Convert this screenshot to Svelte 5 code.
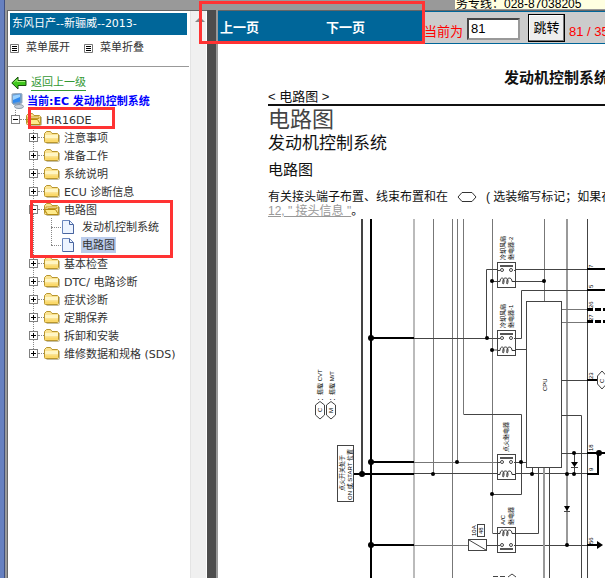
<script>
  let rootOpen = $state(true);
  let sections = $state([
    { name: '注意事项', open: false, pages: [] },
    { name: '准备工作', open: false, pages: [] },
    { name: '系统说明', open: false, pages: [] },
    { name: 'ECU 诊断信息', open: false, pages: [] },
    { name: '电路图', open: true, pages: ['发动机控制系统', '电路图'] },
    { name: '基本检查', open: false, pages: [] },
    { name: 'DTC/ 电路诊断', open: false, pages: [] },
    { name: '症状诊断', open: false, pages: [] },
    { name: '定期保养', open: false, pages: [] },
    { name: '拆卸和安装', open: false, pages: [] },
    { name: '维修数据和规格 (SDS)', open: false, pages: [] }
  ]);
  let page = $state('81');

  function setAll(open) {
    rootOpen = open;
    for (const s of sections) s.open = open;
  }

  // [x1, y1, x2, y2, style]
  const wires = [
    [362, 219, 362, 474, 'bus'], [371, 219, 371, 578, 'bold'],
    [414, 219, 414, 578, 'pale'], [433.5, 219, 433.5, 474, 'grey'],
    [452.5, 219, 452.5, 578, 'grey'], [457.5, 219, 457.5, 462, 'grey'],
    [463.5, 219, 463.5, 414, 'grey'], [492.5, 219, 492.5, 533, 'grey'],
    [544.5, 219, 544.5, 302, 'grey'], [567, 219, 567, 545, 'mid'],
    [587.5, 219, 587.5, 578, 'thin'],
    [371, 338, 414, 338, 'bold'], [414, 338.5, 498, 338.5, 'thin'],
    [371, 462, 414, 462, 'bold'], [414, 462.5, 498, 462.5, 'grey'],
    [354, 474, 414, 474, 'bold'], [414, 473.5, 498, 473.5, 'thin'],
    [371, 545, 414, 545, 'bold'], [414, 545.5, 469, 545.5, 'grey'],
    [487, 545.5, 498, 545.5, 'thin'], [516, 545.5, 587, 545.5, 'thin'],
    [587, 545, 598, 545, 'bold'],
    [516, 269.5, 587, 269.5, 'thin'], [587, 269, 605, 269, 'bold'],
    [492, 281.5, 498, 281.5, 'thin'], [516, 281.5, 544, 281.5, 'thin'],
    [587, 290, 605, 290, 'bold'],
    [492, 350, 498, 350, 'thin'], [516, 349.5, 527, 349.5, 'thin'],
    [562, 309.5, 587, 309.5, 'grey'], [562, 322.5, 587, 322.5, 'grey'],
    [562, 380.5, 587, 380.5, 'thin'], [587, 380, 597, 380, 'bold'],
    [562, 453.5, 587, 453.5, 'thin'], [587, 453, 605, 453, 'bold'],
    [516, 462.5, 527, 462.5, 'thin'], [516, 473.5, 587, 473.5, 'thin'],
    [532.5, 467, 532.5, 474, 'thin'], [574.5, 453, 574.5, 474, 'thin'],
    [544, 467, 544, 578, 'mid'], [549.5, 467, 549.5, 578, 'thin']
  ];
  const bends = [
    'M498 269.5H486.5V338', 'M516 338.5H521.5V290.5H587', 'M463.5 414.5H521.5V494.5H492',
    'M492.5 533.5H498', 'M516 533.5H538.5V467', 'M562 415.5H581.5V578'
  ];
  const dots = [
    [371, 338, 3], [371, 462, 3], [362, 474, 3], [371, 545, 3], [599, 453, 3],
    [433, 474, 2], [457, 462, 2], [487, 338, 2], [492, 281, 2], [544, 281, 2],
    [492, 350, 2], [521, 462, 2], [532, 474, 2], [567, 474, 2], [574, 474, 2],
    [574, 453, 2], [492, 494, 2], [567, 545, 2]
  ];
  // box top, contact height, coil height
  const relays = [
    [262, 270, 281], [330, 338, 350], [454, 462, 474], [527, 545, 533]
  ];
  const labels = [
    [505, 260, '冷却风扇'], [513, 260, '继电器-2'], [505, 328, '冷却风扇'], [513, 328, '继电器-1'],
    [508, 452, '点火继电器'], [505, 525, 'A/C'], [513, 525, '继电器'], [476, 536, '10A'],
    [483, 534, '48'], [547, 391, 'CPU'], [322, 401, '：搭载 CVT'], [334, 401, '：搭载 M/T'],
    [344, 491, '点火开关处于'], [352, 500, 'ON 或 START 位置'], [593, 268, '7'], [593, 288, '5'],
    [593, 308, '26'], [593, 321, '27'], [593, 379, '23'], [593, 451, '18'],
    [593, 471, '9'], [593, 544, '56'], [322, 412, 'C'], [333, 413, 'M'], [604, 383, 'C']
  ];
</script>

{#snippet folder(open)}
  <svg class="folder" viewBox="0 0 16 14" aria-hidden="true">
    <path d="M2.5 13.5H14.5Q15.5 13.5 15.5 12V5" fill="none" stroke="#c4bea4" />
    <path d="M.5 11.5V3.5L2.5 1.5H6.5L8 3.5H13.5L14.5 4.5V11.5Q14.5 12.5 13.5 12.5H1.5Q.5 12.5 .5 11.5Z" fill="#fbe391" stroke="#b8962e" />
    {#if open}
      <path d="M3.5 6.5H13V5H2V11" fill="#fffbe0" stroke="#c79b22" />
      <path d="M.5 7.5H11.5L14.5 12.5H3.5Z" fill="#ffeb8c" stroke="#b58b12" />
    {:else}
      <path d="M1 5H14V8H1Z" fill="#fff6c4" />
      <path d="M1 9.500H14V12H1Z" fill="#fbd96a" />
    {/if}
  </svg>
{/snippet}

{#snippet listIcon()}
  <svg class="list-icon" viewBox="0 0 9 9" aria-hidden="true">
    <path d="M.5 .5H8.5V8.5H.5Z" fill="#fff" stroke="#777" />
    <path d="M2 2.5H7M2 4.5H7M2 6.5H7" stroke="#000" />
  </svg>
{/snippet}

<div class="window">
  <div class="hotline"><span>务专线：028-87038205</span></div>
  <div class="panes">
    <nav class="sidebar">
      <div class="side-body">
        <h2 class="car">东风日产--新骊威--2013-</h2>
        <div class="tools">
          <button onclick={() => setAll(true)}>{@render listIcon()}菜单展开</button>
          <button onclick={() => setAll(false)}>{@render listIcon()}菜单折叠</button>
        </div>
        <div class="line back">
          <svg width="16" height="14" viewBox="0 0 16 14" aria-hidden="true">
            <path d="M.8 7L7 1V4.5H15V9.5H7V13Z" fill="#3fc71d" stroke="#174d0b" />
            <path d="M3 6.5L6 3.5V5.5H14" fill="none" stroke="#a4f07a" />
          </svg>
          <a href="#up">返回上一级</a>
        </div>
        <div class="line current">
          <svg width="13" height="16" viewBox="0 0 13 16" aria-hidden="true">
            <path d="M1 1L9 0L11 1V10L3 12L1 10Z" fill="#6f9ccb" stroke="#9aabbd" />
            <path d="M2 2.5L9 1.5V8.5L2 10Z" fill="#2f8af0" />
            <path d="M2 2.5L9 1.5V4L2 7Z" fill="#9bd2ff" />
            <path d="M6 11L9 10V13H6Z" fill="#8293a6" />
            <ellipse cx="8" cy="13.5" rx="4.5" ry="2" fill="#c9d3de" stroke="#8a99a8" />
          </svg>
          <a href="#ec">当前:EC 发动机控制系统</a>
        </div>
        <ul class="tree">
          <li>
            <div class="row root">
              <button class="toggle" class:open={rootOpen} aria-label="HR16DE" onclick={() => (rootOpen = !rootOpen)}></button>
              <a href="#hr16de">{@render folder(true)}<span class="name">HR16DE</span></a>
              <span class="mark mark-engine"></span>
            </div>
            {#if rootOpen}
              <ul class="sections">
                {#each sections as s}
                  <li>
                    <div class="row">
                      <button class="toggle" class:open={s.open} aria-label={s.name} onclick={() => (s.open = !s.open)}></button>
                      <a href="#section">{@render folder(s.open)}<span class="name">{s.name}</span></a>
                      {#if s.pages.length}<span class="mark mark-section"></span>{/if}
                    </div>
                    {#if s.open && s.pages.length}
                      <ul class="pages">
                        {#each s.pages as p, i}
                          <li class="row leaf">
                            <a href="#page">
                              <svg width="12" height="14" viewBox="0 0 12 14" aria-hidden="true">
                                <path d="M.5 .5H7.5L11.5 4.5V13.5H.5Z" fill="#edf4ff" stroke="#6a86bd" />
                                <path d="M7.5 .5V4.5H11.5M1 13.5H11.5V5" fill="none" stroke="#49659f" />
                              </svg>
                              <span class="name" class:selected={i === 1}>{p}</span>
                            </a>
                          </li>
                        {/each}
                      </ul>
                    {/if}
                  </li>
                {/each}
              </ul>
            {/if}
          </li>
        </ul>
      </div>
      <div class="scroll">
        <svg width="10" height="5" viewBox="0 0 10 5" aria-hidden="true"><path d="M0 5L5 0L10 5Z" fill="#888" /></svg>
      </div>
    </nav>
    <div class="divider"></div>
    <main>
      <header>
        <div class="pager">
          <button>上一页</button>
          <button>下一页</button>
        </div>
        <form class="jump" onsubmit={(e) => e.preventDefault()}>
          <label for="page">当前为</label>
          <input id="page" type="text" bind:value={page} />
          <button>跳转</button>
          <span>81 / 350</span>
        </form>
      </header>
      <article>
        <p class="running">发动机控制系统</p>
        <p class="crumb">&lt; 电路图 &gt;</p>
        <h1>电路图</h1>
        <h2>发动机控制系统</h2>
        <h3>电路图</h3>
        <p class="note">
          有关接头端子布置、线束布置和在
          <svg width="20" height="10" viewBox="0 0 20 10" aria-hidden="true"><path d="M1 5L5 .5H15L19 5L15 9.5H5Z" fill="none" stroke="#333" /></svg>
          ( 选装缩写标记；如果在
        </p>
        <p class="ref"><a href="#connector">12, " 接头信息 "</a>。</p>
        <svg class="diagram" width="387" height="360" viewBox="218 218 387 360" role="img" aria-label="电路图">
          {#each wires as [x1, y1, x2, y2, kind]}
            <line class={kind} {x1} {y1} {x2} {y2} />
          {/each}
          {#each bends as d}
            <path class="thin" {d} />
          {/each}
          <path d="M587 309.5H605M587 321.5H605" stroke="#000" stroke-width="3" stroke-dasharray="6 2" />
          <path d="M587 474H598V453" fill="none" stroke="#000" stroke-width="2" />
          <rect class="box" x="526.5" y="301.5" width="35" height="166" />
          {#each relays as [top, contact, coil]}
            <rect class="box" x="497.5" y={top + 0.5} width="18" height="25" />
            <line class="bar" x1="500" x2="513" y1={coil > contact ? contact - 4 : contact + 4} y2={coil > contact ? contact - 4 : contact + 4} />
            <path class="thin" d="M498 {contact}.5H500M514 {contact}.5H516" />
            <circle class="box" cx="502" cy={contact} r="1.5" />
            <circle class="box" cx="511" cy={contact} r="1.5" />
            <path class="coil" d="M498 {coil}.5H500C500 {coil - 4} 504 {coil - 4} 504 {coil}C504 {coil + 4} 502 {coil + 4} 503 {coil}C503 {coil - 4} 508 {coil - 4} 508 {coil}C508 {coil + 4} 506 {coil + 4} 507 {coil}C507 {coil - 4} 512 {coil - 4} 512 {coil}.5H516" />
          {/each}
          {#each dots as [cx, cy, r]}
            <circle {cx} {cy} {r} />
          {/each}
          <path d="M571 462H578L574.5 467ZM564 506H570L567 511ZM597 541L603 545L597 549Z" />
          <path class="thin" d="M571 467.5H578M564 511.5H570" />
          <rect class="box" x="468.5" y="539.5" width="18" height="11" />
          <path class="thin" d="M469 540L486 550" />
          <rect class="box" x="477.5" y="524.5" width="7" height="12" />
          <rect class="box" x="337.5" y="445.5" width="16" height="56" />
          <path class="box" d="M320 401.500L324.500 405V415L320 419L315.500 415V405ZM331 401.500L335.500 405V415L331 419L326.500 415V405ZM602 371L606.500 376V384L602 389L597.500 384V376Z" />
          <path class="thin" d="M493 576.500H498M500 576.500H505M508 577L512 574L516 577" />
          {#each labels as [x, y, text]}
            <text transform="translate({x} {y}) rotate(-90)">{text}</text>
          {/each}
        </svg>
      </article>
      <span class="mark mark-pager"></span>
    </main>
  </div>
</div>

<style>
  :global(body) { margin: 0; }
  * { box-sizing: border-box; }
  .window {
    height: 100vh;
    display: flex;
    flex-direction: column;
    overflow: hidden;
    background: #999;
    border-left: 4px solid #6680c0;
    box-shadow: inset 1px 0 #405080;
    color: #333;
    font: 11px/18px "DejaVu Sans", "Noto Sans CJK SC", sans-serif;
  }
  p, h1, h2, h3, ul { margin: 0; padding: 0; }
  ul { list-style: none; }
  button { font: inherit; color: inherit; background: none; border: 0; padding: 0; cursor: pointer; }
  a { color: inherit; text-decoration: none; }
  svg { flex: none; }

  .hotline { flex: none; height: 10px; display: flex; justify-content: flex-end; }
  .hotline span {
    width: 150px;
    height: 9px;
    overflow: hidden;
    display: flex;
    align-items: flex-end;
    padding-left: 1px;
    white-space: nowrap;
    background: #ffffe1;
    color: #000;
    font: 12px/10px "Liberation Sans", "Noto Sans CJK SC", sans-serif;
  }
  .panes { flex: 1; min-height: 0; display: flex; padding-left: 3px; }

  .sidebar { flex: none; width: 200px; display: flex; background: #fff; border-top: 1px solid #666; border-left: 1px solid #666; }
  .side-body { flex: 1; min-width: 0; padding-top: 2px; }
  .car {
    height: 22px;
    margin: 0 3px 0 2px;
    padding-left: 2px;
    background: #069;
    color: #fff;
    font-size: 11px;
    line-height: 22px;
    font-weight: normal;
    white-space: nowrap;
  }
  .tools { height: 32px; margin-right: 1px; display: flex; gap: 14px; padding: 4px 0 0 2px; border-bottom: 1px solid #999; }
  .tools button { display: flex; align-items: center; gap: 7px; height: 18px; }
  .list-icon { width: 9px; height: 9px; }
  .line { height: 18px; display: flex; align-items: center; gap: 4px; padding-left: 3px; white-space: nowrap; }
  .back { margin-top: 7px; }
  .back a { color: #393; line-height: 15px; border-bottom: 1px solid #393; }
  .current { gap: 3px; }
  .current a { padding-top: 2px; color: #00f; font-weight: bold; }

  .tree { padding-left: 3px; }
  .row { position: relative; height: 18px; display: flex; align-items: center; }
  .row a { display: flex; align-items: center; gap: 4px; height: 18px; white-space: nowrap; }
  .root::before { content: ""; position: absolute; left: 4px; top: 0; height: 5px; border-left: 1px dotted #888; }
  .folder { width: 16px; height: 14px; }
  .name { padding-top: 2px; line-height: 15px; }
  .toggle { position: relative; width: 9px; height: 9px; margin-right: 6px; border: 1px solid #808080; background: #fff; }
  .toggle::before { content: ""; position: absolute; left: 1px; top: 3px; width: 5px; height: 1px; background: #000; }
  .toggle:not(.open)::after { content: ""; position: absolute; left: 3px; top: 1px; width: 1px; height: 5px; background: #000; }
  .row:not(.leaf) a { position: relative; }
  .row:not(.leaf) a::before { content: ""; position: absolute; left: -6px; top: 9px; width: 6px; border-top: 1px dotted #888; }
  .sections { position: relative; padding-left: 18px; }
  .sections::before { content: ""; position: absolute; left: 22px; top: 0; bottom: 9px; border-left: 1px dotted #888; }
  .pages { position: relative; padding-left: 22px; }
  .pages::before { content: ""; position: absolute; left: 22px; top: 0; bottom: 9px; border-left: 1px dotted #888; }
  .leaf::before { content: ""; width: 10px; margin-right: 1px; border-top: 1px dotted #888; }
  .leaf .name { padding: 1px 1px 0; }
  .row.leaf a { gap: 7px; }
  .selected { background: #bccdec; }
  .scroll { width: 17px; background: #f0f0f0; border-left: 1px solid #e4e4e4; border-right: 1px solid #fff; padding: 6px 0 0 4px; line-height: 0; }

  .divider { flex: none; width: 9px; margin-right: 1px; background: #4d4d4d; }
  main { position: relative; flex: 1; min-width: 0; display: flex; flex-direction: column; background: #fff; border-top: 1px solid #666; margin-left: 1px; }
  header { flex: none; height: 33px; display: flex; background: #ccc; border-top: 1px solid #069; border-bottom: 1px solid #069; font: 13px/20px "Liberation Sans", "Noto Sans CJK SC", sans-serif; }
  .pager { flex: none; width: 206px; display: flex; align-items: center; gap: 67px; padding-left: 2px; background: #069; color: #fff; font-weight: bold; }
  .jump { flex: 1; min-width: 0; display: flex; align-items: center; white-space: nowrap; color: #f00; overflow: hidden; }
  .jump label, .jump span { padding-top: 8px; flex: none; }
  .jump input { flex: none; width: 53px; height: 22px; margin: 2px 8px 0 4px; padding: 0 2px; border: 2px inset #999; background: #fff; font: inherit; color: #000; }
  .jump button { flex: none; width: 37px; height: 28px; margin-right: 4px; background: #eee; border: 1px solid #000; box-shadow: inset -1px -1px #777, inset 1px 1px #fff; color: #000; line-height: 22px; }

  article { flex: 1; min-height: 0; overflow: hidden; padding: 24px 0 0 50px; color: #111; white-space: nowrap; font: 12px/14px "Liberation Sans", "Noto Sans CJK SC", sans-serif; }
  .running { padding-left: 236px; font-size: 15px; line-height: 20px; font-weight: bold; }
  .crumb { margin-top: 2px; font-size: 13px; line-height: 14px; border-bottom: 2px solid #111; }
  h1 { font-size: 22px; line-height: 27px; font-weight: normal; color: #444; }
  h2 { font-size: 17px; line-height: 22px; font-weight: normal; }
  article h3 { padding-top: 5px; font-size: 15px; line-height: 20px; font-weight: normal; }
  .note { height: 14px; margin-top: 10px; display: flex; align-items: center; gap: 9px; }
  .ref a { color: #999; text-decoration: underline; }
  .diagram { display: block; margin-left: -50px; }
  .diagram text { font: 6px "Liberation Sans", "Noto Sans CJK SC", sans-serif; fill: #000; }
  .diagram line, .thin { stroke: #444; fill: none; }
  .diagram .bus { stroke: #444; stroke-width: 2px; }
  .diagram .bold { stroke: #000; stroke-width: 2px; }
  .diagram .bar { stroke: #555; stroke-width: 2px; }
  .diagram .pale { stroke: #bbb; stroke-width: 2px; }
  .diagram .mid { stroke: #999; stroke-width: 2px; }
  .diagram .grey { stroke: #777; }
  .box { fill: #fff; stroke: #444; }
  .diagram path.box { fill: none; }
  .coil { fill: none; stroke: #333; }

  .mark { position: absolute; border: 3px solid #f33; pointer-events: none; z-index: 2; }
  .mark-engine { left: 17px; top: -3px; width: 87px; height: 22px; }
  .mark-section { left: 1px; top: 0; width: 143px; height: 58px; }
  .mark-pager { left: -19px; top: -10px; width: 226px; height: 43px; }
</style>
